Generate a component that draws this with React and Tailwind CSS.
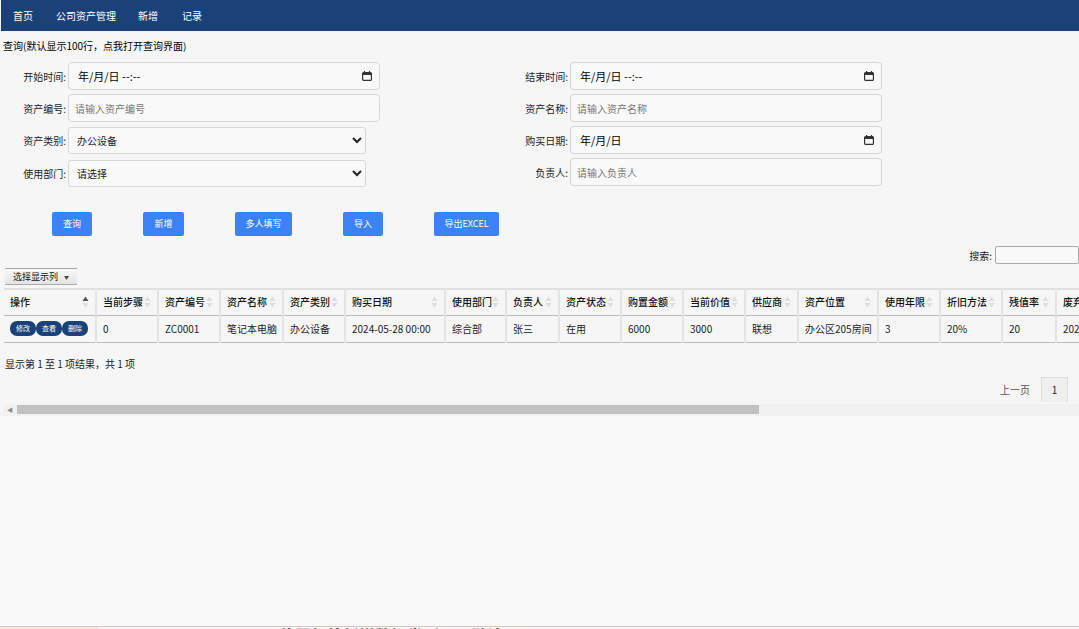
import React from "react";

const navItems = [
    { label: "首页", cls: "mr-[23px]" },
    { label: "公司资产管理", cls: "mr-[22px]" },
    { label: "新增", cls: "mr-[24px]" },
    { label: "记录", cls: "" },
];

const columns = [
    { title: "操作", cls: "w-[92px]", active: true },
    { title: "当前步骤", cls: "w-[62px]" },
    { title: "资产编号", cls: "w-[62px]" },
    { title: "资产名称", cls: "w-[63px]" },
    { title: "资产类别", cls: "w-[62px]" },
    { title: "购买日期", cls: "w-[100px]" },
    { title: "使用部门", cls: "w-[61px]" },
    { title: "负责人", cls: "w-[53px]" },
    { title: "资产状态", cls: "w-[62px]" },
    { title: "购置金额", cls: "w-[62px]" },
    { title: "当前价值", cls: "w-[62px]" },
    { title: "供应商", cls: "w-[53px]" },
    { title: "资产位置", cls: "w-[80px]" },
    { title: "使用年限", cls: "w-[62px]" },
    { title: "折旧方法", cls: "w-[62px]" },
    { title: "残值率", cls: "w-[54px]" },
    { title: "废弃日期", cls: "w-[90px]" },
];

const row = ["0", "ZC0001", "笔记本电脑", "办公设备", "2024-05-28 00:00", "综合部", "张三", "在用", "6000", "3000", "联想", "办公区205房间", "3", "20%", "20", "2027-05-28"];

const CalendarIcon = () => (
    <svg width="10" height="10" viewBox="0 0 10 10" className="shrink-0">
        <path d="M2.5 0v2M7.5 0v2" stroke="#333" strokeWidth="1.2" />
        <rect x="0.6" y="1.6" width="8.8" height="7.8" rx="1" fill="none" stroke="#333" strokeWidth="1.2" />
        <rect x="1" y="2" width="8" height="2" fill="#333" />
    </svg>
);

const SortIcon = ({ active }) => (
    <svg width="7" height="12" viewBox="0 0 7 12" className="shrink-0">
        <path d="M3.5 0.5L6.5 5H0.5Z" fill={active ? "#555" : "#ddd"} />
        <path d="M3.5 11.5L0.5 7H6.5Z" fill="#ddd" />
    </svg>
);

const DateField = ({ text }) => (
    <div className="w-[312px] h-[28px] flex items-center justify-between pl-[9px] pr-[7px] bg-[#f9f9f9] border border-[#d5d5d5] rounded-[4px] text-[11px] text-black">
        <span>{text}</span>
        <CalendarIcon />
    </div>
);

const TextField = ({ placeholder }) => (
    <input
        readOnly
        placeholder={placeholder}
        className="w-[312px] h-[28px] px-[6px] bg-[#f9f9f9] border border-[#d5d5d5] rounded-[4px] text-[10px] placeholder:text-[#777] outline-none"
    />
);

const SelectField = ({ value }) => (
    <select
        defaultValue={value}
        className="w-[298px] h-[27px] pl-[4px] pr-[3px] bg-[#f9f9f9] border border-[#d8d8d8] rounded-[3px] text-[10px] text-[#222]"
    >
        <option>{value}</option>
    </select>
);

const Label = ({ children }) => (
    <label className="w-[63px] shrink-0 text-right text-[10px] text-[#222] mr-[2px]">{children}</label>
);

const actionButtons = [
    { label: "查询", cls: "w-[40px] mr-[51px]" },
    { label: "新增", cls: "w-[41px] mr-[51px]" },
    { label: "多人填写", cls: "w-[57px] mr-[51px]" },
    { label: "导入", cls: "w-[40px] mr-[51px]" },
    { label: "导出EXCEL", cls: "w-[65px]" },
];

export default function App() {
    return (
        <div className="h-[629px] overflow-hidden flex flex-col bg-[#f6f6f6] font-['Noto_Sans_CJK_SC','Liberation_Sans',sans-serif]">
            <nav className="h-[31px] shrink-0 ml-px bg-[#1a4178] flex items-center pl-[12px] text-[10px] text-white">
                {navItems.map((item) => (
                    <a key={item.label} className={item.cls}>{item.label}</a>
                ))}
            </nav>

            <div className="shrink-0 pl-[3px] flex flex-col">
                <p className="mt-[7px] h-[16px] leading-[16px] text-[10px] text-black">查询(默认显示100行，点我打开查询界面)</p>

                <div className="mt-[8px] flex">
                    <div className="w-[502px] flex flex-col">
                        <div className="flex items-center">
                            <Label>开始时间:</Label>
                            <DateField text="年/月/日 --:--" />
                        </div>
                        <div className="mt-[4px] flex items-center">
                            <Label>资产编号:</Label>
                            <TextField placeholder="请输入资产编号" />
                        </div>
                        <div className="mt-[5px] flex items-center">
                            <Label>资产类别:</Label>
                            <SelectField value="办公设备" />
                        </div>
                        <div className="mt-[6px] flex items-center">
                            <Label>使用部门:</Label>
                            <SelectField value="请选择" />
                        </div>
                    </div>
                    <div className="flex flex-col">
                        <div className="flex items-center">
                            <Label>结束时间:</Label>
                            <DateField text="年/月/日 --:--" />
                        </div>
                        <div className="mt-[4px] flex items-center">
                            <Label>资产名称:</Label>
                            <TextField placeholder="请输入资产名称" />
                        </div>
                        <div className="mt-[4px] flex items-center">
                            <Label>购买日期:</Label>
                            <DateField text="年/月/日" />
                        </div>
                        <div className="mt-[4px] flex items-center">
                            <Label>负责人:</Label>
                            <TextField placeholder="请输入负责人" />
                        </div>
                    </div>
                </div>

                <div className="mt-[25px] ml-[49px] flex">
                    {actionButtons.map((btn) => (
                        <button key={btn.label} className={`${btn.cls} h-[24px] bg-[#3b82f6] rounded-[2px] text-[9px] text-white`}>
                            {btn.label}
                        </button>
                    ))}
                </div>

                <div className="mt-[10px] h-[18px] flex justify-end items-center">
                    <span className="text-[10px] text-[#222] mr-[3px]">搜索:</span>
                    <input readOnly className="w-[84px] shrink-0 h-[18px] bg-[#f9f9f9] border border-[#aaa] rounded-[2px]" />
                </div>

                <button className="mt-[4px] ml-[2px] w-[72px] h-[17px] bg-gradient-to-b from-[#f8f8f8] to-[#e4e4e4] border-t border-b border-[#aaa] text-[9px] text-[#111] flex items-center justify-center gap-[6px]">
                    <span>选择显示列</span>
                    <span className="text-[5px] text-[#444]">▼</span>
                </button>

                <div className="mt-[3px] ml-px overflow-hidden shrink-0">
                    <table className="table-fixed w-[1142px] border-collapse text-[10px] leading-[14px] text-[#111]">
                        <thead>
                            <tr className="h-[26px]">
                                {columns.map((col) => (
                                    <th key={col.title} className={`${col.cls} px-[6px] font-medium text-left border-2 border-[#e4e4e4] border-b border-b-[#bbb] border-t-[#e0e0e0] border-l-0`}>
                                        <div className="flex items-center justify-between overflow-hidden whitespace-nowrap">
                                            <span>{col.title}</span>
                                            <SortIcon active={col.active} />
                                        </div>
                                    </th>
                                ))}
                            </tr>
                        </thead>
                        <tbody>
                            <tr className="h-[27px]">
                                <td className="px-[6px] border-r-2 border-r-[#e4e4e4] border-b border-b-[#bbb]">
                                    <div className="flex">
                                        {["修改", "查看", "删除"].map((t) => (
                                            <button key={t} className="w-[26px] h-[15px] leading-[15px] bg-[#1a4178] rounded-[7px] text-[7px] text-white">
                                                {t}
                                            </button>
                                        ))}
                                    </div>
                                </td>
                                {row.map((cell, i) => (
                                    <td key={i} className="px-[6px] border-r-2 border-r-[#e4e4e4] border-b border-b-[#bbb] whitespace-nowrap overflow-hidden text-[#222]">
                                        {cell}
                                    </td>
                                ))}
                            </tr>
                        </tbody>
                    </table>
                </div>

                <p className="mt-[13px] ml-[2px] h-[16px] leading-[16px] text-[10px] text-[#222]">显示第 1 至 1 项结果，共 1 项</p>

                <div className="mt-[5px] flex justify-end items-center pr-[11px]">
                    <span className="text-[10px] text-[#555] mr-[11px]">上一页</span>
                    <span className="w-[27px] h-[25px] flex items-center justify-center bg-[#efefef] border border-[#ddd] border-b-0 text-[10px] text-[#222]">1</span>
                </div>

                <div className="mt-[2px] h-[12px] bg-[#f1f1f1] flex items-center">
                    <span className="w-[14px] text-center text-[6px] leading-none text-[#888]">◀</span>
                    <div className="w-[742px] h-[9px] bg-[#c1c1c1]" />
                </div>
            </div>

            <div className="flex-1 bg-[#f9f9f9]" />

            <div className="h-[3px] shrink-0 overflow-hidden flex border-t border-[#d8c8c4] bg-[#fdf4f2]">
                <div className="w-[98px] shrink-0 bg-[#fbe4df]" />
                <p className="ml-[152px] text-[16px] font-bold leading-[16px] text-[#444] whitespace-nowrap">4、 位置额外新增数据类别里，默认11</p>
            </div>
        </div>
    );
}
